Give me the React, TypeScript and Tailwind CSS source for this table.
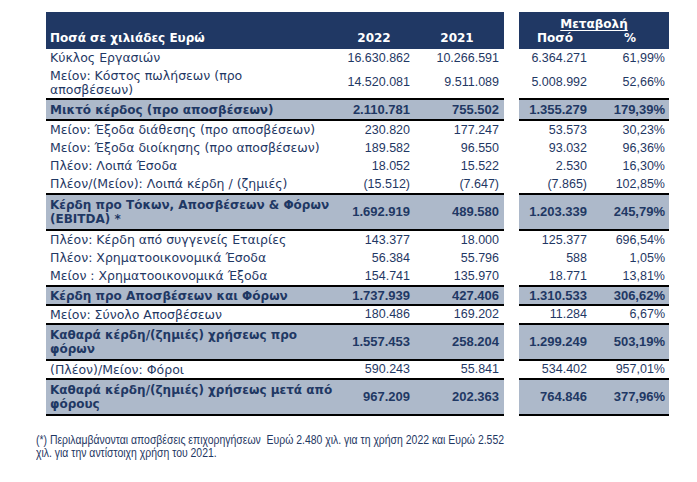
import React from "react";

type Row = {
  label: React.ReactNode;
  v: [string, string, string, string];
  total?: boolean;
  h: string;
  border?: boolean;
};

const rows: Row[] = [
  { label: "Κύκλος Εργασιών", v: ["16.630.862", "10.266.591", "6.364.271", "61,99%"], h: "h-[18px]" },
  {
    label: (
      <>
        Μείον: Κόστος πωλήσεων (προ
        <br />
        αποσβέσεων)
      </>
    ),
    v: ["14.520.081", "9.511.089", "5.008.992", "52,66%"],
    h: "h-[33px]",
    border: true,
  },
  { label: "Μικτό κέρδος (προ αποσβέσεων)", v: ["2.110.781", "755.502", "1.355.279", "179,39%"], total: true, h: "h-[21px]", border: true },
  { label: "Μείον: Έξοδα διάθεσης (προ αποσβέσεων)", v: ["230.820", "177.247", "53.573", "30,23%"], h: "h-[18px]" },
  { label: "Μείον: Έξοδα διοίκησης (προ αποσβέσεων)", v: ["189.582", "96.550", "93.032", "96,36%"], h: "h-[18px]" },
  { label: "Πλέον: Λοιπά Έσοδα", v: ["18.052", "15.522", "2.530", "16,30%"], h: "h-[18px]" },
  { label: "Πλέον/(Μείον): Λοιπά κέρδη / (ζημιές)", v: ["(15.512)", "(7.647)", "(7.865)", "102,85%"], h: "h-[20px]", border: true },
  {
    label: (
      <>
        Κέρδη προ Τόκων, Αποσβέσεων &amp; Φόρων
        <br />
        (EBITDA) *
      </>
    ),
    v: ["1.692.919", "489.580", "1.203.339", "245,79%"],
    total: true,
    h: "h-[36px]",
    border: true,
  },
  { label: "Πλέον: Κέρδη από συγγενείς Εταιρίες", v: ["143.377", "18.000", "125.377", "696,54%"], h: "h-[18px]" },
  { label: "Πλέον: Χρηματοοικονομικά Έσοδα", v: ["56.384", "55.796", "588", "1,05%"], h: "h-[18px]" },
  { label: "Μείον : Χρηματοοικονομικά Έξοδα", v: ["154.741", "135.970", "18.771", "13,81%"], h: "h-[20px]", border: true },
  { label: "Κέρδη προ Αποσβέσεων και Φόρων", v: ["1.737.939", "427.406", "1.310.533", "306,62%"], total: true, h: "h-[19px]", border: true },
  { label: "Μείον: Σύνολο Αποσβέσεων", v: ["180.486", "169.202", "11.284", "6,67%"], h: "h-[19px]", border: true },
  {
    label: (
      <>
        Καθαρά κέρδη/(ζημιές) χρήσεως προ
        <br />
        φόρων
      </>
    ),
    v: ["1.557.453", "258.204", "1.299.249", "503,19%"],
    total: true,
    h: "h-[36px]",
    border: true,
  },
  { label: "(Πλέον)/Μείον: Φόροι", v: ["590.243", "55.841", "534.402", "957,01%"], h: "h-[19px]", border: true },
  {
    label: (
      <>
        Καθαρά κέρδη/(ζημιές) χρήσεως μετά από
        <br />
        φόρους
      </>
    ),
    v: ["967.209", "202.363", "764.846", "377,96%"],
    total: true,
    h: "h-[36px]",
    border: true,
  },
];

function DataRow({ r }: { r: Row }) {
  const bg = r.total ? "bg-[#adb9ca] font-bold" : "bg-white";
  const b = r.border ? "border-b-2 border-black" : "";
  const lab = r.total ? "text-[12px]" : "text-[12.5px]";
  const num = r.total
    ? "font-['Liberation_Sans',sans-serif] text-[13px]"
    : "font-['Liberation_Sans',sans-serif] text-[12.5px]";
  return (
    <div className={`flex ${r.h}`}>
      <div className={`flex w-[458px] items-center box-border ${bg} ${b}`}>
        <div className={`w-[292px] pl-1 leading-[14px] ${lab}`}>{r.label}</div>
        <div className={`w-[76px] pr-1 text-right ${num}`}>{r.v[0]}</div>
        <div className={`w-[90px] pr-[5px] text-right ${num}`}>{r.v[1]}</div>
      </div>
      <div className="w-[15px]" />
      <div className={`flex w-[150px] items-center box-border ${bg} ${b}`}>
        <div className={`w-[72px] pr-1 text-right ${num}`}>{r.v[2]}</div>
        <div className={`w-[78px] pr-1 text-right ${num}`}>{r.v[3]}</div>
      </div>
    </div>
  );
}

export default function App() {
  return (
    <div className="w-[697px] h-[482px] bg-white overflow-hidden text-[#1f3864] font-['DejaVu_Sans',sans-serif] text-[12px]">
      <div className="pt-[12px] pl-[46px]">
        <div className="flex h-[37px]">
          <div className="flex w-[458px] items-end bg-[#203864] pb-[2px] font-bold text-white">
            <div className="w-[292px] pl-1">Ποσά σε χιλιάδες Ευρώ</div>
            <div className="w-[72px] text-center">2022</div>
            <div className="w-[94px] text-center">2021</div>
          </div>
          <div className="w-[15px]" />
          <div className="flex w-[150px] flex-col bg-[#203864] font-bold text-white">
            <div className="h-[20px] pt-[3px] text-center">
              <span className="underline underline-offset-2">Μεταβολή</span>
            </div>
            <div className="flex h-[17px] items-end pb-[2px]">
              <div className="w-[72px] text-center">Ποσό</div>
              <div className="w-[78px] text-center">%</div>
            </div>
          </div>
        </div>
        {rows.map((r, i) => (
          <DataRow key={i} r={r} />
        ))}
      </div>
      <div className="pl-[36px] pt-[18px] font-['Liberation_Sans',sans-serif] text-[12px] leading-[13px] text-[#1f3864]">
        <div className="origin-left scale-x-[0.87] whitespace-nowrap">
          (*) Περιλαμβάνονται αποσβέσεις επιχορηγήσεων&nbsp; Ευρώ 2.480 χιλ. για τη χρήση 2022 και Ευρώ 2.552
          <br />
          χιλ. για την αντίστοιχη χρήση του 2021.
        </div>
      </div>
    </div>
  );
}
